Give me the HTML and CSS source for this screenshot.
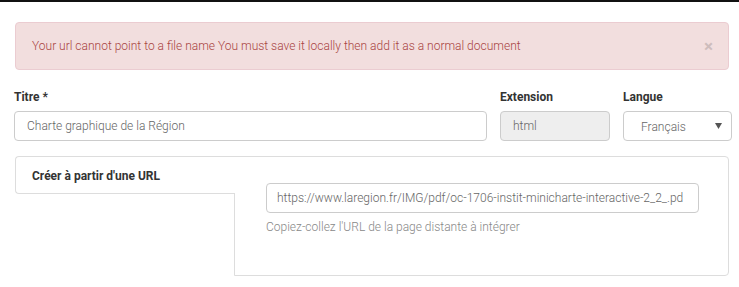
FILE: index.html
```html
<!DOCTYPE html>
<html lang="fr">
<head>
    <meta charset="UTF-8">
    <meta name="viewport" content="width=device-width, initial-scale=1.0">
    <title>Nouveau document</title>
    <link rel="stylesheet" href="styles.css">
</head>
<body>
    <div class="topbar"></div>

    <div class="page">
        <div class="alert">
            <span>Your url cannot point to a file name You must save it locally then add it as a normal document</span>
            <span class="close">&times;</span>
        </div>

        <div class="form-row">
            <div class="field">
                <label>Titre *</label>
                <div class="input">Charte graphique de la Région</div>
            </div>
            <div class="field">
                <label>Extension</label>
                <div class="input disabled">html</div>
            </div>
            <div class="field">
                <label>Langue</label>
                <div class="input select">
                    <span>Français</span>
                    <svg width="7" height="6" viewBox="0 0 7 6"><path d="M0 0h7L3.5 6z" fill="#555"/></svg>
                </div>
            </div>
        </div>

        <div class="tabs">
            <ul class="tab-nav">
                <li class="active">Créer à partir d'une URL</li>
            </ul>
            <div class="tab-content">
                <div class="input url">https://www.laregion.fr/IMG/pdf/oc-1706-instit-minicharte-interactive-2_2_.pd</div>
                <p class="help">Copiez-collez l'URL de la page distante à intégrer</p>
            </div>
        </div>
    </div>
</body>
</html>
```

FILE: styles.css
```css
body {
    font-family: Roboto, "Liberation Sans", sans-serif;
    font-size: 12px;
    font-weight: 300;
    line-height: 18px;
    color: #555;
    background-color: #fff;
    margin: 0;
    padding: 0;
}
.topbar {
    height: 2px;
    background-color: #111;
}
.page {
    padding: 20px 10px 0 15px;
}

/* alerte */
.alert {
    display: flex;
    justify-content: space-between;
    align-items: center;
    padding: 14px 15px 14px 16px;
    background-color: #f2dede;
    border: 1px solid #ebccd1;
    border-radius: 4px;
    color: #a94442;
}
.close {
    font-size: 17px;
    font-weight: 700;
    color: #000;
    opacity: 0.15;
    margin-right: 0;
}

/* champs */
.form-row {
    display: grid;
    grid-template-columns: 473px 110px 109px;
    column-gap: 13px;
    margin: 18px -2px 0 -1px;
}
.field label {
    display: block;
    font-weight: 700;
    color: #333;
    margin-bottom: 5px;
}
.input {
    height: 30px;
    box-sizing: border-box;
    border: 1px solid #ccc;
    border-radius: 4px;
    padding: 5px 12px;
    color: #666;
    white-space: nowrap;
    overflow: hidden;
}
.input.disabled {
    background-color: #eee;
}
.select {
    display: flex;
    justify-content: space-between;
    align-items: center;
    padding: 5px 9px 5px 17px;
}
.select span {
    padding-top: 2px;
}

/* onglets */
.tabs {
    display: flex;
    margin-top: 15px;
}
.tab-nav {
    list-style: none;
    margin: 0;
    padding: 0;
    width: 219px;
    flex-shrink: 0;
    position: relative;
    z-index: 1;
}
.tab-nav li {
    height: 38px;
    box-sizing: border-box;
    padding: 10px 15px 10px 16px;
    font-weight: 700;
    color: #333;
    background-color: #fff;
    border: 1px solid #ddd;
    border-right: none;
    border-radius: 4px 0 0 4px;
    margin-right: -1px;
}
.tab-content {
    flex: 1;
    min-width: 0;
    height: 120px;
    box-sizing: border-box;
    border: 1px solid #ddd;
    border-radius: 0 4px 4px 0;
    padding: 26px 29px 0 31px;
}
.url {
    padding-left: 10px;
}
.help {
    margin: 5px 0 0;
    color: #888;
}
```
